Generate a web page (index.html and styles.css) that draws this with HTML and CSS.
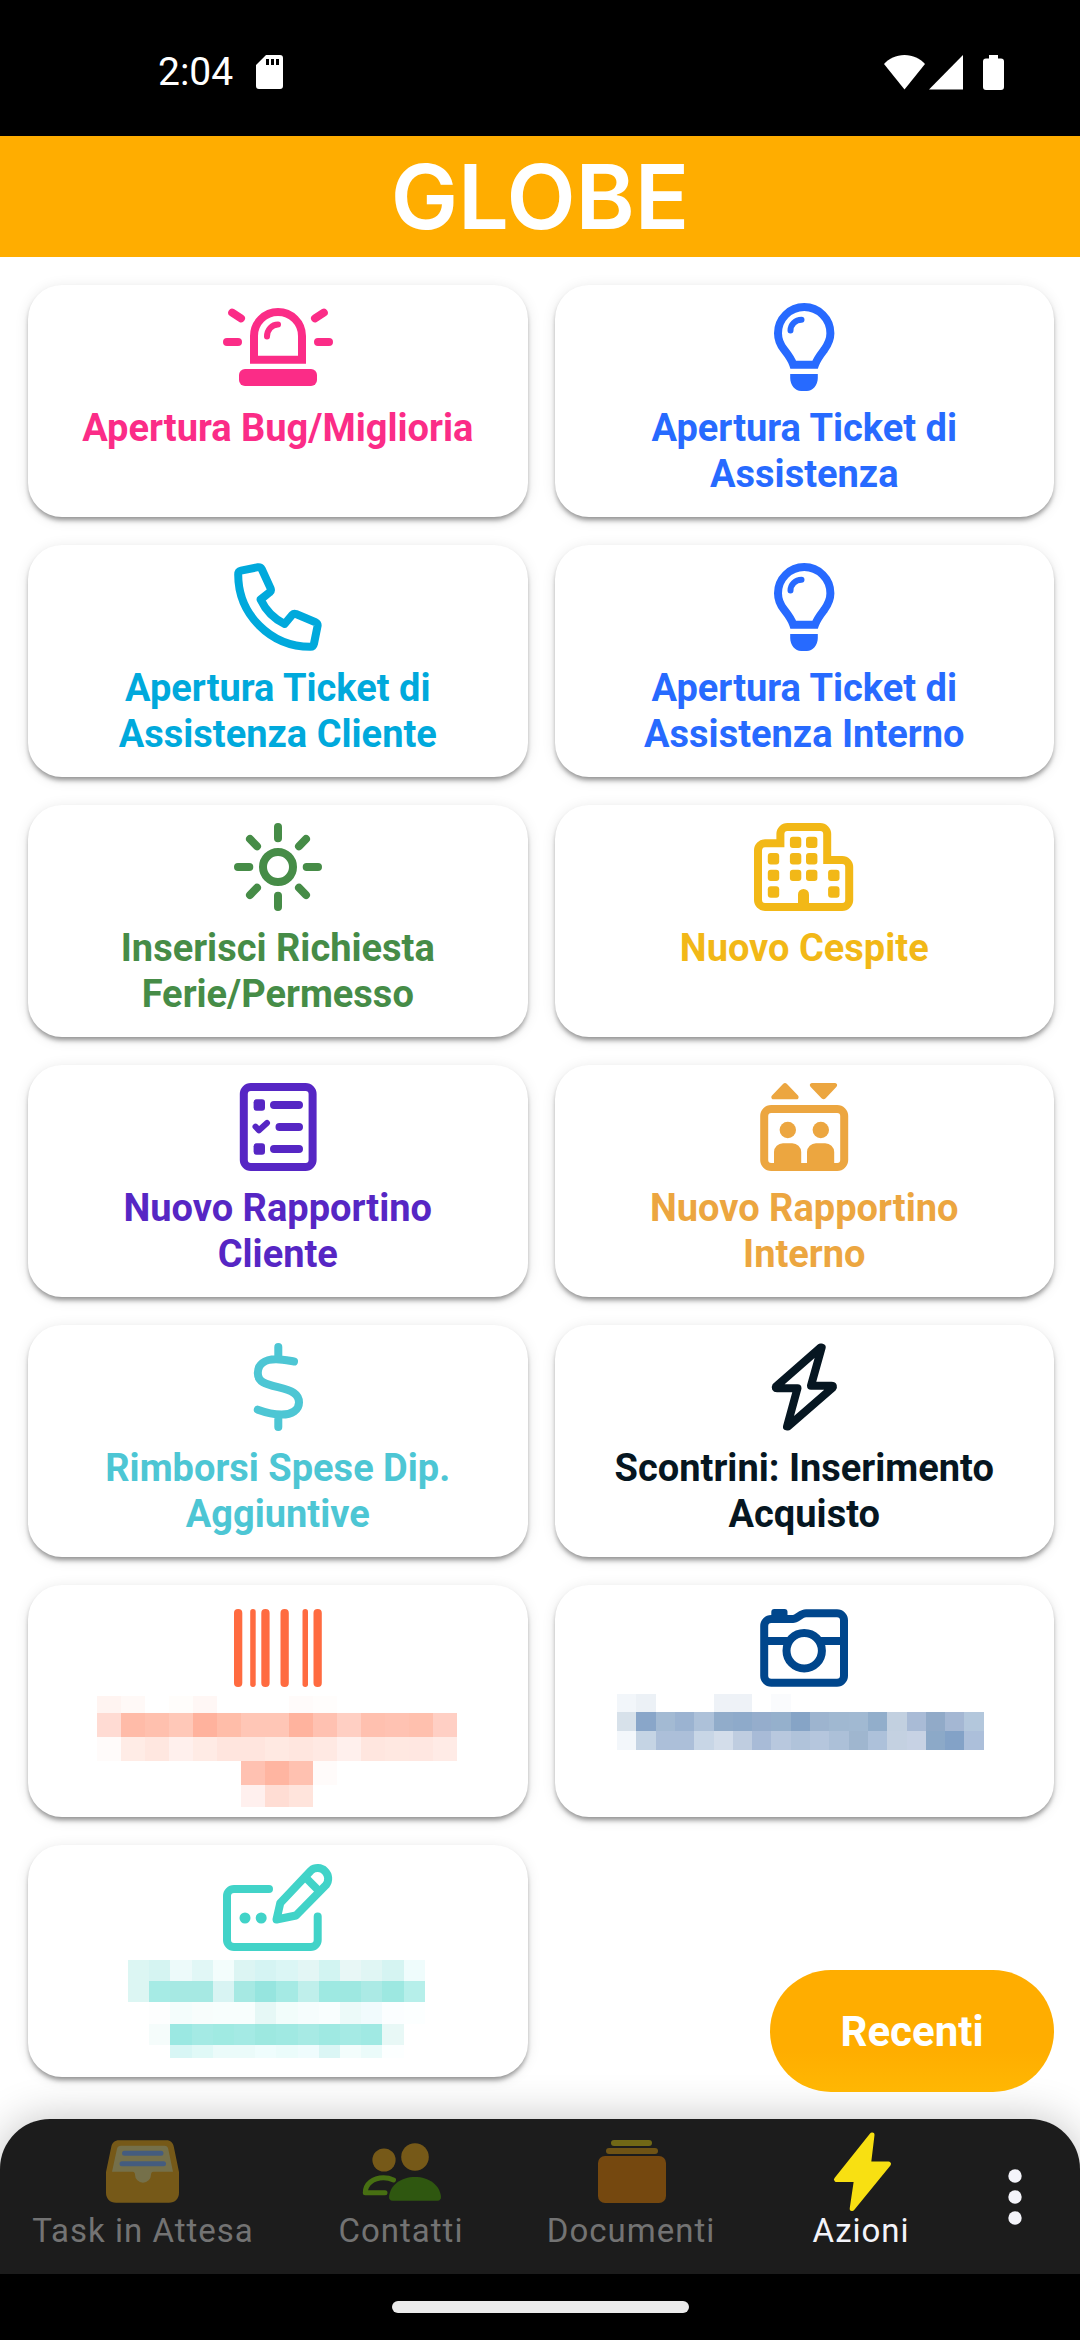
FILE: index.html
```html
<!DOCTYPE html>
<html lang="it">
<head>
<meta charset="utf-8">
<meta name="viewport" content="width=device-width, initial-scale=1">
<title>Globe – Azioni</title>
<link rel="stylesheet" href="styles.css">
</head>
<body>
<div class="status">
  <time class="status-time">2:04</time>
  <svg class="status-sd" width="27" height="34" viewBox="0 0 27 34"><path fill="#fff" fill-rule="evenodd" d="M10 0H24a3 3 0 0 1 3 3V31a3 3 0 0 1-3 3H3a3 3 0 0 1-3-3V10ZM10 4v6h3V4Zm5 0v6h3V4Zm5 0v6h3V4Z"/></svg>
  <div class="status-right">
    <svg width="41" height="35" viewBox="0 0 41 35"><path fill="#fff" d="M20.500 34.500 0 9C5 3.500 12 0 20.500 0S36 3.500 41 9Z"/></svg>
    <svg width="34" height="35" viewBox="0 0 34 35"><path fill="#fff" d="M34 0V34.500H0Z"/></svg>
    <svg class="status-battery" width="21" height="35" viewBox="0 0 21 35"><path fill="#fff" d="M6 0H15V3.500H18a3 3 0 0 1 3 3V32a3 3 0 0 1-3 3H3a3 3 0 0 1-3-3V6.500a3 3 0 0 1 3-3H6Z"/></svg>
  </div>
</div>

<header class="topbar"><h1 class="logo">GLOBE</h1></header>

<main class="grid">
  <button class="card pink" type="button">
    <svg class="icon" viewBox="0 0 110 88"><path d="M31 56.700V33a24 24 0 0 1 48 0V56.700Z" stroke-linejoin="miter"/><path d="M44 33.500a11 12 0 0 1 11-12" stroke-width="6"/><rect class="fill" x="16" y="66" width="78" height="17" rx="6"/><path d="M4 39H15M95 39H106M9.200 9.700 18 15.300M100.800 9.700 92 15.300"/></svg>
    <span class="label">Apertura Bug/Miglioria</span>
  </button>
  <button class="card blue" type="button">
    <svg class="icon" viewBox="0 0 110 88"><path d="M44.300 61.700C42.500 56 38.500 51 35 46.500C31 41.500 29 36 29 30.300A26.200 26.200 0 0 1 81.400 30.300C81.400 36 79 41.500 75.400 46.500C72 51 68 56 66 61.700Z" stroke-linejoin="miter"/><path d="M41.500 27.500c0-6 5-10.800 11-10.800" stroke-width="6"/><path class="fill" d="M41.200 71h27.600v4c0 7-5 13-11 13h-5.600c-6 0-11-6-11-13z"/></svg>
    <span class="label">Apertura Ticket di Assistenza</span>
  </button>
  <button class="card cyan" type="button">
    <svg class="icon" viewBox="0 0 110 88"><path d="M15.200 11.500C15.200 9 16 8 18 7.600L35 4.200C36.800 4 38 4.600 38.700 6L47.600 25.400C48.200 27 48 28.300 46.800 29.200L37.600 36.500C42.500 47 50.500 55.500 61.600 61L69.300 51.800C70.300 50.800 71.500 50.500 73 51L92.500 59.200C94 60 94.800 61 94.600 62.800L91 80.600C90.500 82.800 89.400 83.800 87.400 83.800C47.500 83.800 15.200 51.500 15.200 11.500Z"/></svg>
    <span class="label">Apertura Ticket di Assistenza Cliente</span>
  </button>
  <button class="card blue" type="button">
    <svg class="icon" viewBox="0 0 110 88"><path d="M44.300 61.700C42.500 56 38.500 51 35 46.500C31 41.500 29 36 29 30.300A26.200 26.200 0 0 1 81.400 30.300C81.400 36 79 41.500 75.400 46.500C72 51 68 56 66 61.700Z" stroke-linejoin="miter"/><path d="M41.500 27.500c0-6 5-10.800 11-10.800" stroke-width="6"/><path class="fill" d="M41.200 71h27.600v4c0 7-5 13-11 13h-5.600c-6 0-11-6-11-13z"/></svg>
    <span class="label">Apertura Ticket di Assistenza Interno</span>
  </button>
  <button class="card green" type="button">
    <svg class="icon" viewBox="0 0 110 88"><circle cx="55" cy="44" r="15"/><path d="M55 4V15.300M55 72.700V84M15 44H26.300M83.700 44H95M27 16 34 23.300M83 16 76 23.300M27 72 34 64.700M83 72 76 64.700"/></svg>
    <span class="label">Inserisci Richiesta Ferie/Permesso</span>
  </button>
  <button class="card yellow" type="button">
    <svg class="icon" viewBox="0 0 110 88"><path d="M31.400 20.300H16a7 7 0 0 0-7 7V77a7 7 0 0 0 7 7H93.200a7 7 0 0 0 7-7V44a7 7 0 0 0-7-7H78.200V11a7 7 0 0 0-7-7H38.400a7 7 0 0 0-7 7Z" stroke-linejoin="miter"/><g class="fill"><rect x="18.800" y="30" width="11.400" height="11.400" rx="3"/><rect x="18.800" y="46.700" width="11.400" height="11.400" rx="3"/><rect x="18.800" y="63.300" width="11.400" height="11.400" rx="3"/><rect x="40.900" y="13.700" width="11.400" height="11.400" rx="3"/><rect x="40.900" y="30" width="11.400" height="11.400" rx="3"/><rect x="40.900" y="46.700" width="11.400" height="11.400" rx="3"/><rect x="57" y="13.700" width="11.400" height="11.400" rx="3"/><rect x="57" y="30" width="11.400" height="11.400" rx="3"/><rect x="57" y="46.700" width="11.400" height="11.400" rx="3"/><rect x="79.100" y="46.700" width="11.400" height="11.400" rx="3"/><rect x="79.100" y="63.300" width="11.400" height="11.400" rx="3"/><path d="M49 84V71.500a5.500 5.500 0 0 1 11 0V84Z"/></g></svg>
    <span class="label">Nuovo Cespite</span>
  </button>
  <button class="card violet" type="button">
    <svg class="icon" viewBox="0 0 110 88"><rect x="20.800" y="4" width="68.800" height="80" rx="7"/><path d="M51 22H76M56.500 44H76M51 66H76"/><path d="M32.500 43.700 36 47.300 44 40" stroke-width="6"/><rect class="fill" x="30.600" y="16.300" width="11.400" height="11.400" rx="3"/><rect class="fill" x="30.600" y="60.300" width="11.400" height="11.400" rx="3"/></svg>
    <span class="label">Nuovo Rapportino Cliente</span>
  </button>
  <button class="card amber" type="button">
    <svg class="icon" viewBox="0 0 110 88"><rect x="15.200" y="26" width="80" height="58" rx="7"/><g class="fill"><path d="M34 1a3 3 0 0 1 4 0L49 12.500c1.200 1.600.5 3.800-1.500 3.800H24.500c-2 0-2.900-2.200-1.500-3.800ZM72.500 15.300a3 3 0 0 0 4.200 0L87.500 3.800C88.800 2.200 88 0 86 0H63c-2 0-2.900 2.200-1.500 3.800Z"/><circle cx="38.800" cy="47" r="8.200"/><circle cx="71.800" cy="47" r="8.200"/><path d="M25 84V69a9 9 0 0 1 9-8.700H43.200a9 9 0 0 1 9 8.700V84ZM58 84V69a9 9 0 0 1 9-8.700H76.200a9 9 0 0 1 9 8.700V84Z"/></g></svg>
    <span class="label">Nuovo Rapportino Interno</span>
  </button>
  <button class="card aqua" type="button">
    <svg class="icon" viewBox="0 0 110 88"><path d="M55.300 4V15M55.300 73V84M71 18.500C65 17.500 59 16.300 53 16.300C41 16.300 34.800 22 34.800 30C34.800 39 42 41 55 44.200C69 47.500 76 51 76 59.500C76 67 69 71.500 58.500 71.500C50 71.500 42 69.300 34.800 66.700"/></svg>
    <span class="label">Rimborsi Spese Dip. Aggiuntive</span>
  </button>
  <button class="card navy" type="button">
    <svg class="icon" viewBox="0 0 110 88"><path d="M71.500 4.500 27 43.500Q26 45.300 28 45.300H48.500L38 83.500H39L83.300 45Q85 42.700 82.500 42.700H62L72.700 4.500Z"/></svg>
    <span class="label">Scontrini: Inserimento Acquisto</span>
  </button>
  <button class="card orange" type="button" aria-label="Azione oscurata">
    <svg class="icon" viewBox="0 0 110 88"><g class="fill"><rect x="11" y="6" width="8.300" height="78" rx="4"/><rect x="27.200" y="6" width="5.500" height="78" rx="2.700"/><rect x="38.300" y="6" width="8.300" height="78" rx="4"/><rect x="57.500" y="6" width="8.300" height="78" rx="4"/><rect x="79.500" y="6" width="5.500" height="78" rx="2.700"/><rect x="90.500" y="6" width="8.300" height="78" rx="4"/></g></svg>
    <svg class="mosaic" data-mosaic="orange" width="362" height="114" viewBox="0 0 362 114"></svg>
  </button>
  <button class="card marine" type="button" aria-label="Azione oscurata">
    <svg class="icon" viewBox="0 0 110 88"><path d="M22.200 16H44c4 0 8-5.700 13-5.700H88a7 7 0 0 1 7 7V72.700a7 7 0 0 1-7 7H22.200a7 7 0 0 1-7-7V23a7 7 0 0 1 7-7ZM15.200 38H40M70 38H95" stroke-linecap="butt"/><circle cx="55.200" cy="47.700" r="17.700"/><path class="fill" d="M22.300 16V9a3 3 0 0 1 3-3H35.500a3 3 0 0 1 3 3V16Z"/></svg>
    <svg class="mosaic" data-mosaic="marine" width="374" height="114" viewBox="0 0 374 114"></svg>
  </button>
  <button class="card teal" type="button" aria-label="Azione oscurata">
    <svg class="icon" viewBox="0 0 110 88"><path d="M46 26H11a7 7 0 0 0-7 7V77a7 7 0 0 0 7 7H87.700a7 7 0 0 0 7-7V53.500"/><path d="M53.500 56.500 57.300 40 88 7.500A10.500 10.500 0 0 1 103 22L73 52.500 Z"/><path d="M83.600 15.500 94.500 26.500" stroke-linecap="butt"/><circle class="fill" cx="22" cy="55" r="5.500"/><circle class="fill" cx="38.200" cy="55" r="5.500"/></svg>
    <svg class="mosaic" data-mosaic="teal" width="300" height="114" viewBox="0 0 300 114"></svg>
  </button>
</main>

<footer class="dock">
  <button class="fab" type="button">Recenti</button>
  <nav class="tabs">
    <a class="tab" href="#task">
      <svg width="80" height="80" viewBox="0 0 80 80"><path fill="#765918" d="M16 8.300H63.500c4 0 6.500 2.500 7.300 6.500L76 40V60.700c0 6-4 10-10 10H13c-6 0-10-4-10-10V40L8.300 14.800c.8-4 3.500-6.500 7.700-6.500Z"/><path fill="#75704a" d="M18 13.700H61.500c2 0 3.300 1 3.700 3L70 39.700H50.500c-2 0-2.500 1.500-2.500 3a8 8 0 0 1-16 0c0-1.500-.5-3-2.500-3H9L14 16.700c.4-2 2-3 4-3Z"/><path stroke="#445c7f" stroke-width="5" stroke-linecap="round" d="M21.500 21.300H58M19 31.700H60.500"/></svg>
      <span>Task in Attesa</span>
    </a>
    <a class="tab" href="#contatti">
      <svg width="80" height="80" viewBox="0 0 80 80"><circle fill="#765918" cx="23" cy="28" r="11.600"/><circle fill="#765918" cx="54" cy="25" r="13.800"/><path fill="none" stroke="#476f12" stroke-width="5" stroke-linecap="round" stroke-linejoin="round" d="M32.500 48C29.500 46.600 26 45.800 22.500 45.800C12 45.800 4.300 52 4.300 60.700H24"/><path fill="#2f5710" d="M31.500 68.700C29 68.700 28 67 28 65C29 53 40 45 54 45S79 53 80 65c0 2-1 3.700-3.500 3.700z"/></svg>
      <span>Contatti</span>
    </a>
    <a class="tab" href="#documenti">
      <svg width="80" height="80" viewBox="0 0 80 80"><rect fill="#716816" x="20" y="8" width="41" height="6" rx="3"/><rect fill="#6f5315" x="15" y="16" width="52" height="6" rx="3"/><rect fill="#75480f" x="7" y="24" width="68" height="47" rx="7"/></svg>
      <span>Documenti</span>
    </a>
    <a class="tab active" href="#azioni" aria-current="page">
      <svg width="80" height="80" viewBox="0 0 80 80"><path fill="#f8e012" stroke="#f8e012" stroke-width="5" stroke-linejoin="round" d="M51 3 15.500 47.500H35.500L31.200 76.500 67.500 32H47.500Z"/></svg>
      <span>Azioni</span>
    </a>
    <button class="more" type="button" aria-label="Altro">
      <svg width="14" height="56" viewBox="0 0 14 56"><g fill="#f4f4fa"><circle cx="7" cy="7" r="6.700"/><circle cx="7" cy="28" r="6.700"/><circle cx="7" cy="49" r="6.700"/></g></svg>
    </button>
  </nav>
</footer>
<div class="system"><span class="handle"></span></div>
<script src="script.js"></script>
</body>
</html>
```
FILE: styles.css
```css
* { box-sizing: border-box; }

body {
  margin: 0;
  min-height: 100vh;
  display: flex;
  flex-direction: column;
  background: #fff;
  font-family: Roboto, "Liberation Sans", sans-serif;
}

button {
  margin: 0;
  border: 0;
  background: none;
  font: inherit;
  color: inherit;
  cursor: pointer;
}

svg { display: block; }

/* Status bar */
.status {
  display: flex;
  align-items: center;
  height: 136px;
  padding: 8px 76px 0 158px;
  background: #000;
  color: #fff;
}
.status-time { font-size: 39px; line-height: 46px; }
.status-sd { margin-left: 23px; }
.status-right { display: flex; gap: 4px; margin-left: auto; }
.status-battery { margin-left: 16px; }

/* Header */
.topbar {
  display: flex;
  align-items: center;
  justify-content: center;
  height: 121px;
  background: #ffad00;
}
.logo {
  margin: 0;
  font: 600 90px/100px Inter, sans-serif;
  color: #fff;
}

/* Action cards */
.grid {
  flex: 1;
  display: grid;
  grid-template-columns: 1fr 1fr;
  align-content: start;
  gap: 28px 27px;
  padding: 28px 26px 41px 28px;
}
.card {
  display: flex;
  flex-direction: column;
  align-items: center;
  min-height: 232px;
  padding: 18px 40px 0;
  border-radius: 34px;
  background: #fff;
  box-shadow: 0 4px 5px -1px rgba(0, 0, 0, .4), 0 2px 14px rgba(0, 0, 0, .1);
}
.icon {
  flex: none;
  width: 110px;
  height: 88px;
  fill: none;
  stroke: currentColor;
  stroke-width: 8;
  stroke-linecap: round;
  stroke-linejoin: round;
}
.icon .fill { fill: currentColor; stroke: none; }
.label {
  margin-top: 14px;
  font-size: 38px;
  font-weight: 700;
  line-height: 46px;
  text-align: center;
}
.mosaic { flex: none; margin-top: 3px; }

.pink { color: #fb2c87; }
.blue { color: #276aff; }
.cyan { color: #00a9dc; }
.green { color: #468c47; }
.yellow { color: #f2b817; }
.violet { color: #5626c4; }
.amber { color: #eca640; }
.aqua { color: #4dc6d4; }
.navy { color: #061621; }
.orange { color: #ff6b40; }
.marine { color: #00468c; }
.teal { color: #41d3c8; }

/* Bottom navigation */
.dock { position: relative; }
.fab {
  position: absolute;
  right: 26px;
  bottom: calc(100% + 27px);
  width: 284px;
  height: 122px;
  padding: 0;
  border-radius: 61px;
  background: linear-gradient(#ffad00 65%, #ffb703);
  color: #fff;
  font-size: 42px;
  font-weight: 700;
  z-index: 1;
}
.tabs {
  display: grid;
  grid-template-columns: 286fr 230fr 230fr 230fr 78fr;
  padding: 13px 26px 24px 0;
  border-radius: 50px 50px 0 0;
  background: #1c1c1c;
  box-shadow: 0 0 44px rgba(0, 0, 0, .24);
}
.tab {
  display: flex;
  flex-direction: column;
  align-items: center;
  color: #737373;
  font-size: 33px;
  line-height: 38px;
  text-decoration: none;
  letter-spacing: 1px;
}
.tab.active { color: #f4f4fa; }
.more {
  display: flex;
  align-items: center;
  justify-content: center;
  padding: 12px 0 0;
}

/* Gesture bar */
.system {
  display: flex;
  align-items: center;
  justify-content: center;
  height: 66px;
  background: #000;
  z-index: 1;
}
.handle {
  width: 297px;
  height: 12px;
  border-radius: 6px;
  background: #ebebeb;
}
```
FILE: script.js
```js
// Censored card titles: top offset, column width, row heights and cell tints.
const mosaics = {
  orange: {
    y: 2, col: 24, rows: [17, 24, 24, 24, 22],
    cells: [
      'fff4f1 fff9f7 - fffdfb fff7f5 - - - fffbfa fffdfc - - - - -',
      'ffdbd3 ffbba8 ffc0ae ffc8b8 ffb29d ffbda9 ffc6b6 ffc6b6 ffb39e ffc1b1 ffcfc3 ffc0af ffc2b2 ffc0ae ffcfc4',
      'fffbfa ffece6 ffe7e0 fff0ed ffebe5 ffe5de ffe5de ffe9e2 ffe6df ffe9e3 fff0ed ffe6df ffe8e1 ffe7e1 ffebe6',
      '- - - - - - ffc1b1 ffb5a1 ffc1b0 fffbfa - - - - -',
      '- - - - - - fff0ee ffddd4 ffe4dc - - - - - -'
    ]
  },
  marine: {
    y: 0, col: 19.3, rows: [18, 19, 19],
    cells: [
      'f2f6fa ecf1f6 - - - eef2f7 eef2f7 - fafbfd - - - - - - - - - -',
      'd7e1ea 89a6c9 a3bad3 9bb3d1 adc1d9 91acca 8eaaca 95adcc 95b0cc 86a4c6 9db4cf a0b8d1 a1b9d2 92aecb c2d0e0 a9bbd6 91aac8 a4b7d3 b3c7dc',
      'f3f7fb c5d4e4 acbfd9 acbfd9 c8d6e6 d3ddea bfcde0 a8bbd7 b8c8de b0c3da b5c6dd acc0d8 9fb6cf adc1da c4d1e1 c7d2e4 8ca9c8 83a2c7 acbfda'
    ]
  },
  teal: {
    y: 6, col: 21.2, rows: [21, 21, 22, 21, 13],
    cells: [
      'dcf6f3 d5f4f2 edfafa e1f7f6 f3fdfc dcf5f3 d5f4f3 dbf6f5 e3f6f5 d2f4f2 e8f7f6 e0f6f4 d5f4f2 effcfc',
      'dcf6f3 a6ebe5 a6e9e3 a6e9e3 d8f4f3 a6e9e3 96e5df a5eae4 bfefeb 9ee9e2 9ee8e1 abeae5 9de8e1 b6efea',
      '- fdfefe f4fdfc f8fdfc f8fefd f8fefd e6f8f6 f2fdfb f6fdfd f9fefe ecfaf9 f1fbfd fbfeff fcffff',
      '- f5fcfb 9be8e2 a4eae4 a0eae2 a4eae4 9de8e0 a0e9e2 a7eae4 9fe9e2 a5eae4 a0e9e3 e8f8f6 -',
      '- - d8f6f5 e0f9f7 ebfbfa ebfbfa effdfd ebfcfb effcfd dbf6f5 f3fdfc ebfbfa fcffff -'
    ]
  }
};

document.querySelectorAll('[data-mosaic]').forEach((svg) => {
  const { y: top, col, rows, cells } = mosaics[svg.dataset.mosaic];
  let y = top;
  rows.forEach((height, r) => {
    cells[r].split(' ').forEach((tint, c) => {
      if (tint === '-') return;
      const rect = document.createElementNS('http://www.w3.org/2000/svg', 'rect');
      const x = Math.round(c * col);
      rect.setAttribute('x', x);
      rect.setAttribute('y', y);
      rect.setAttribute('width', Math.round((c + 1) * col) - x);
      rect.setAttribute('height', height);
      rect.setAttribute('fill', '#' + tint);
      svg.append(rect);
    });
    y += height;
  });
});
```
